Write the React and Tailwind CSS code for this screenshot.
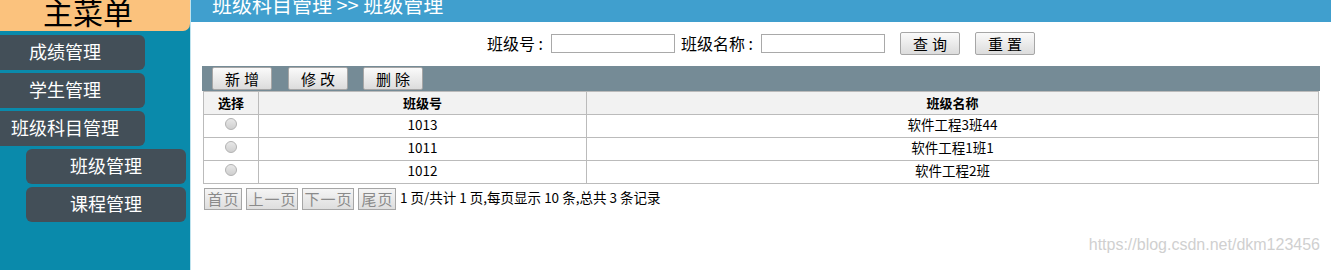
import React from "react";

const font = { fontFamily: '"Noto Sans CJK SC", "Noto Sans", sans-serif' };

function Btn({ children, className = "" }) {
  return (
    <button
      className={
        "h-[23px] border border-[#a6a6a6] rounded-[2px] bg-gradient-to-b from-[#fafafa] to-[#dcdcdc] text-[15px] text-black leading-none tracking-[4px] pl-[4px] pb-[1px] " +
        className
      }
    >
      {children}
    </button>
  );
}

function PageBtn({ children, w }) {
  return (
    <button
      className={
        "h-[22px] border border-[#a6a6a6] bg-gradient-to-b from-[#f5f5f5] to-[#dedede] text-[15px] text-[#8a8a8a] leading-none tracking-[1px] pl-[1px] pb-[1px] " +
        w
      }
    >
      {children}
    </button>
  );
}

function Radio() {
  return (
    <span className="inline-block w-[12px] h-[12px] rounded-full border border-[#b3b3b3] bg-gradient-to-b from-[#e8e8e8] to-[#cfcfcf]" />
  );
}

export default function App() {
  const rows = [
    ["1013", "软件工程3班44"],
    ["1011", "软件工程1班1"],
    ["1012", "软件工程2班"],
  ];
  return (
    <div className="flex w-[1331px] h-[270px] overflow-hidden bg-white" style={font}>
      {/* Sidebar */}
      <div className="w-[191px] h-full bg-[#0a8aab] flex flex-col border-r border-[#bfe3ee]">
        <div className="h-[31px] w-[190px] bg-[#fbc27d] rounded-br-[7px] overflow-hidden flex justify-center pr-[14px]">
          <span className="text-[30px] leading-none text-black mt-[-4px]">主菜单</span>
        </div>
        <div className="flex flex-col gap-[3px] mt-[4px]">
          {["成绩管理", "学生管理", "班级科目管理"].map((t) => (
            <div
              key={t}
              className="w-[145px] h-[35px] bg-[#434f58] rounded-r-[6px] flex items-center justify-center pr-[15px] pb-[3px] text-white text-[18px] leading-none"
            >
              {t}
            </div>
          ))}
          {["班级管理", "课程管理"].map((t) => (
            <div
              key={t}
              className="ml-[26px] w-[160px] h-[35px] bg-[#434f58] rounded-[6px] flex items-center justify-center pb-[3px] text-white text-[18px] leading-none"
            >
              {t}
            </div>
          ))}
        </div>
      </div>

      {/* Main */}
      <div className="flex-1 flex flex-col">
        <div className="h-[22px] bg-[#409fce] overflow-hidden pl-[21px]">
          <span className="block text-[20px] leading-none text-white mt-[-5px] whitespace-nowrap">
            班级科目管理 &gt;&gt; 班级管理
          </span>
        </div>

        <div className="flex justify-center items-center mt-[10px] h-[23px] text-[16px] text-black">
          <span className="leading-none pb-[2px] mr-[8px]">班级号 :</span>
          <input className="w-[124px] h-[19px] border border-[#a9a9a9]" />
          <span className="leading-none ml-[6px] mr-[8px] pb-[2px]">班级名称 :</span>
          <input className="w-[124px] h-[19px] border border-[#a9a9a9]" />
          <Btn className="w-[60px] ml-[15px]">查询</Btn>
          <Btn className="w-[60px] ml-[15px]">重置</Btn>
        </div>

        <div className="mx-[11px] mt-[11px]">
          <div className="h-[25px] bg-[#758b96] flex items-center pl-[10px] gap-[17px]">
            <Btn className="w-[60px]">新增</Btn>
            <Btn className="w-[60px] ml-[-1px]">修改</Btn>
            <Btn className="w-[60px] ml-[-2px]">删除</Btn>
          </div>
          <table className="border-collapse text-[13px] text-black ml-[1px]" style={{ width: "1116px" }}>
            <thead>
              <tr className="bg-[#f2f2f2] h-[23px]">
                <th className="w-[55px] border border-[#bbbbbb] font-bold leading-none pb-[1px]">选择</th>
                <th className="w-[328px] border border-[#bbbbbb] font-bold leading-none pb-[1px]">班级号</th>
                <th className="border border-[#bbbbbb] font-bold leading-none pb-[1px]">班级名称</th>
              </tr>
            </thead>
            <tbody>
              {rows.map(([id, name]) => (
                <tr key={id} className="h-[23px]">
                  <td className="border border-[#bbbbbb] text-center align-top pt-[3px] leading-none">
                    <Radio />
                  </td>
                  <td className="border border-[#bbbbbb] text-center leading-none pb-[2px] text-[13.5px]">{id}</td>
                  <td className="border border-[#bbbbbb] text-center leading-none pb-[2px] text-[13.5px]">{name}</td>
                </tr>
              ))}
            </tbody>
          </table>
          <div className="flex items-center gap-[4px] mt-[4px] ml-[2px]">
            <PageBtn w="w-[38px]">首页</PageBtn>
            <PageBtn w="w-[52px]">上一页</PageBtn>
            <PageBtn w="w-[52px]">下一页</PageBtn>
            <PageBtn w="w-[38px]">尾页</PageBtn>
            <span className="text-[13.5px] text-black leading-none pb-[2px] whitespace-nowrap">
              1 页/共计 1 页,每页显示 10 条,总共 3 条记录
            </span>
          </div>
        </div>

        <div className="flex justify-end pr-[11px] mt-[27px]">
          <span className="text-[16px] text-[#d0d0d0] leading-none" style={{ fontFamily: '"Liberation Sans", Arial, sans-serif' }}>
            https://blog.csdn.net/dkm123456
          </span>
        </div>
      </div>
    </div>
  );
}
